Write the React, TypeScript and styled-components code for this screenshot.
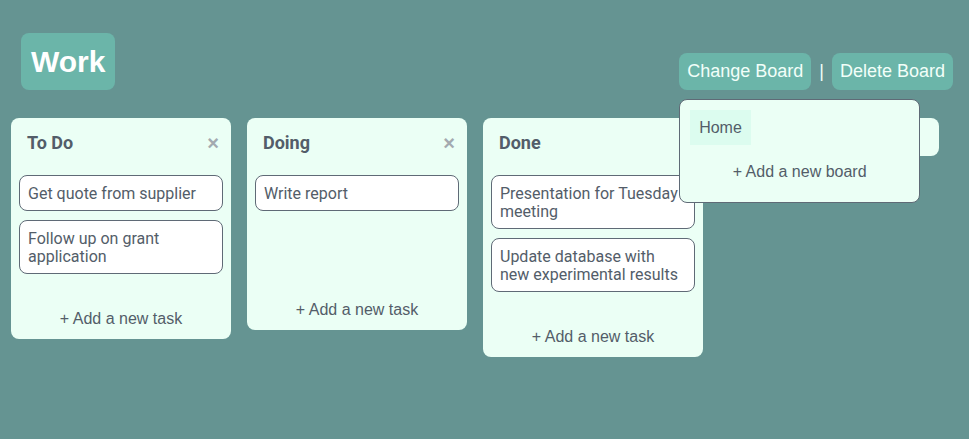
import React from "react";
import styled, { createGlobalStyle } from "styled-components";

const GlobalStyle = createGlobalStyle`
  html, body {
    margin: 0;
    padding: 0;
    background: #659492;
    font-family: "Liberation Sans", Arial, sans-serif;
  }
  * { box-sizing: border-box; }
`;

const Page = styled.div`
  min-height: 439px;
  background: #659492;
`;

const Header = styled.header`
  display: flex;
  justify-content: space-between;
  align-items: flex-end;
  padding: 33px 16px 0 21px;
`;

const BoardTitle = styled.h1`
  margin: 0;
  background: #6bb5a9;
  color: #ffffff;
  font-family: "Liberation Sans", Arial, sans-serif;
  font-weight: 700;
  font-size: 30px;
  line-height: 35px;
  padding: 11px 10px;
  border-radius: 8px;
`;

const Actions = styled.div`
  position: relative;
  display: flex;
  align-items: center;
  gap: 8px;
`;

const HeaderButton = styled.button`
  border: none;
  background: #6bb5a9;
  color: #f2fff9;
  font-family: "Liberation Sans", Arial, sans-serif;
  font-size: 18px;
  line-height: 21px;
  padding: 8px 8px;
  border-radius: 8px;
  cursor: pointer;
`;

const Separator = styled.span`
  color: #f2fff9;
  font-size: 18px;
  line-height: 21px;
`;

const Dropdown = styled.div`
  position: absolute;
  top: calc(100% + 9px);
  left: 0;
  width: 241px;
  height: 104px;
  background: #ebfff5;
  border: 1px solid #5f6a76;
  border-radius: 8px;
  padding: 10px 10px 0 10px;
  display: flex;
  flex-direction: column;
  z-index: 2;
`;

const BoardItem = styled.div<{ $active?: boolean }>`
  align-self: flex-start;
  background: ${(p) => (p.$active ? "#dcfcef" : "transparent")};
  color: #535d69;
  font-size: 16px;
  line-height: 18px;
  padding: 9px 9px 8px 9px;
`;

const AddBoard = styled.div`
  text-align: center;
  color: #535d69;
  font-size: 16px;
  line-height: 18px;
  margin-top: 18px;
`;

const Board = styled.main`
  display: flex;
  align-items: flex-start;
  gap: 16px;
  padding: 28px 11px 0 11px;
`;

const Column = styled.section<{ $empty?: boolean }>`
  width: 220px;
  flex: 0 0 220px;
  background: #ebfff5;
  border-radius: 8px;
  padding: ${(p) => (p.$empty ? "0" : "15px 8px 8px 8px")};
  height: ${(p) => (p.$empty ? "38px" : "auto")};
  display: flex;
  flex-direction: column;
`;

const ColumnHeader = styled.div`
  display: flex;
  justify-content: space-between;
  align-items: center;
  height: 20px;
  padding: 0 4px 0 8px;
  margin-bottom: 22px;
`;

const ColumnTitle = styled.h2`
  margin: 0;
  font-family: Roboto, "Liberation Sans", sans-serif;
  font-weight: 700;
  font-size: 18px;
  line-height: 20px;
  color: #535d69;
`;

const CloseButton = styled.span`
  color: #a3aab0;
  font-family: "Liberation Sans", Arial, sans-serif;
  font-size: 20px;
  line-height: 20px;
  font-weight: 700;
`;

const TaskList = styled.div`
  display: flex;
  flex-direction: column;
  gap: 9px;
  min-height: 90px;
`;

const TaskCard = styled.div`
  background: #ffffff;
  border: 1px solid #5f6a76;
  border-radius: 8px;
  padding: 9px 8px 7px 8px;
  font-family: Roboto, "Liberation Sans", sans-serif;
  font-size: 16px;
  line-height: 18px;
  color: #535d69;
`;

const AddTask = styled.div`
  margin-top: 33px;
  text-align: center;
  font-family: "Liberation Sans", Arial, sans-serif;
  font-size: 16px;
  line-height: 24px;
  color: #535d69;
`;

type Col = { title: string; tasks: string[] };

const columns: Col[] = [
  { title: "To Do", tasks: ["Get quote from supplier", "Follow up on grant application"] },
  { title: "Doing", tasks: ["Write report"] },
  {
    title: "Done",
    tasks: ["Presentation for Tuesday meeting", "Update database with new experimental results"],
  },
];

export default function App() {
  return (
    <Page>
      <GlobalStyle />
      <Header>
        <BoardTitle>Work</BoardTitle>
        <Actions>
          <HeaderButton>Change Board</HeaderButton>
          <Separator>|</Separator>
          <HeaderButton>Delete Board</HeaderButton>
          <Dropdown>
            <BoardItem $active>Home</BoardItem>
            <AddBoard>+ Add a new board</AddBoard>
          </Dropdown>
        </Actions>
      </Header>
      <Board>
        {columns.map((c) => (
          <Column key={c.title}>
            <ColumnHeader>
              <ColumnTitle>{c.title}</ColumnTitle>
              <CloseButton>×</CloseButton>
            </ColumnHeader>
            <TaskList>
              {c.tasks.map((t) => (
                <TaskCard key={t}>{t}</TaskCard>
              ))}
            </TaskList>
            <AddTask>+ Add a new task</AddTask>
          </Column>
        ))}
        <Column $empty />
      </Board>
    </Page>
  );
}
